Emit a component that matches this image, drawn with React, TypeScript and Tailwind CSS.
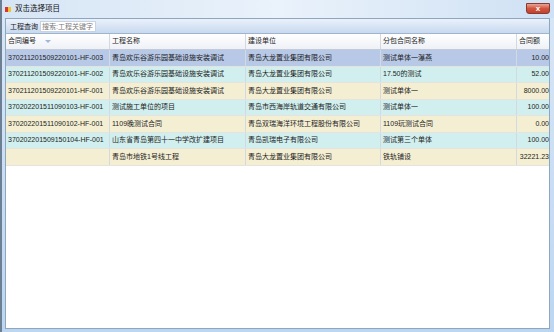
import React from "react";

type Row = {
  code: string;
  project: string;
  owner: string;
  sub: string;
  amount: string;
};

const rows: Row[] = [
  { code: "370211201509220101-HF-003", project: "青岛欢乐谷游乐园基础设施安装调试", owner: "青岛大龙置业集团有限公司", sub: "测试单体一瀑燕", amount: "10.00" },
  { code: "370211201509220101-HF-002", project: "青岛欢乐谷游乐园基础设施安装调试", owner: "青岛大龙置业集团有限公司", sub: "17.50的测试", amount: "52.00" },
  { code: "370211201509220101-HF-001", project: "青岛欢乐谷游乐园基础设施安装调试", owner: "青岛大龙置业集团有限公司", sub: "测试单体一", amount: "8000.00" },
  { code: "370202201511090103-HF-001", project: "测试施工单位的项目", owner: "青岛市西海岸轨道交通有限公司", sub: "测试单体一", amount: "100.00" },
  { code: "370202201511090102-HF-001", project: "1109晚测试合同", owner: "青岛双瑞海洋环境工程股份有限公司", sub: "1109玩测试合同", amount: "0.00" },
  { code: "370202201509150104-HF-001", project: "山东省青岛第四十一中学改扩建项目", owner: "青岛凯瑞电子有限公司", sub: "测试第三个单体", amount: "100.00" },
  { code: "", project: "青岛市地铁1号线工程", owner: "青岛大龙置业集团有限公司", sub: "铁轨铺设", amount: "32221.23" },
];

const font = { fontFamily: '"Liberation Sans", "Noto Sans CJK SC", sans-serif' };

const rowBg = (i: number) => {
  if (i === 0) return "bg-[#b8c9e7]";
  return i % 2 === 1 ? "bg-[#d1efee]" : "bg-[#f4efd3]";
};

const Cell = ({ w, right, children, last }: { w: string; right?: boolean; children?: React.ReactNode; last?: boolean }) => (
  <div
    className={`${w} shrink-0 h-full flex items-center overflow-hidden whitespace-nowrap ${right ? "justify-end pr-[1px]" : "pl-[2px]"} ${last ? "" : "border-r border-[#d3d9e0]"}`}
  >
    {children}
  </div>
);

export default function App() {
  return (
    <div
      className="w-[554px] h-[332px] flex flex-col bg-gradient-to-b from-[#d9e7f6] to-[#bcd6f1] border-l-2 border-[#6d7f92] text-[#1c1c1c] overflow-hidden"
      style={font}
    >
      {/* title bar */}
      <div className="h-[18px] shrink-0 flex items-center relative bg-gradient-to-r from-[#d6e5f5] via-[#eaf2fb] to-[#cfe1f4]">
        <svg width="6" height="5" viewBox="0 0 6 5" className="ml-[3px] mt-[1px]">
          <rect x="0" y="0" width="6" height="5" fill="#f4c430" />
          <rect x="0" y="0" width="3" height="5" fill="#d8362a" />
        </svg>
        <span className="ml-[4px] text-[7.5px] leading-none text-[#101010]">双击选择项目</span>
        <div className="absolute right-[4px] top-[3px] w-[24px] h-[11px] rounded-b-[3px] border border-[#8a3a30] bg-gradient-to-b from-[#eaa394] via-[#d0543f] to-[#c4402a] flex items-center justify-center">
          <span className="text-white text-[8px] leading-none font-bold">x</span>
        </div>
      </div>

      {/* client area */}
      <div className="flex-1 flex flex-col ml-[3px] mr-[4px] mb-[3px] border border-[#8fa6bf] bg-white">
        {/* toolbar */}
        <div className="h-[15px] shrink-0 flex items-center bg-gradient-to-b from-[#eaf1fb] to-[#c8d9ef] border-b border-[#9fb5cf]">
          <span className="ml-[4px] text-[7px] leading-none">工程查询</span>
          <div className="ml-[2px] w-[56px] h-[11px] bg-white border border-[#c7d3e2] flex items-center pl-[1px]">
            <span className="text-[7px] leading-none text-[#7a7a7a]">搜索:工程关键字</span>
          </div>
        </div>

        {/* header */}
        <div className="h-[16px] shrink-0 flex text-[7px] bg-gradient-to-b from-white to-[#eef1f6] border-b border-[#c2cbd7]">
          <Cell w="w-[104px]">
            合同编号
            <svg width="6" height="4" viewBox="0 0 6 4" className="ml-[9px]">
              <path d="M0 0 L6 0 L3 3 Z" fill="#9ab9de" />
            </svg>
          </Cell>
          <Cell w="w-[136px]">工程名称</Cell>
          <Cell w="w-[135px]">建设单位</Cell>
          <Cell w="w-[136px]">分包合同名称</Cell>
          <Cell w="w-[33px]" last>合同额</Cell>
        </div>

        {/* rows */}
        {rows.map((r, i) => (
          <div key={i} className={`h-[16.5px] shrink-0 flex text-[7px] border-b border-[#e4e4dc] ${rowBg(i)}`}>
            <Cell w="w-[104px]">{r.code}</Cell>
            <Cell w="w-[136px]">{r.project}</Cell>
            <Cell w="w-[135px]">{r.owner}</Cell>
            <Cell w="w-[136px]">{r.sub}</Cell>
            <Cell w="w-[33px]" right last>{r.amount}</Cell>
          </div>
        ))}

        <div className="flex-1 bg-white" />
      </div>
    </div>
  );
}
